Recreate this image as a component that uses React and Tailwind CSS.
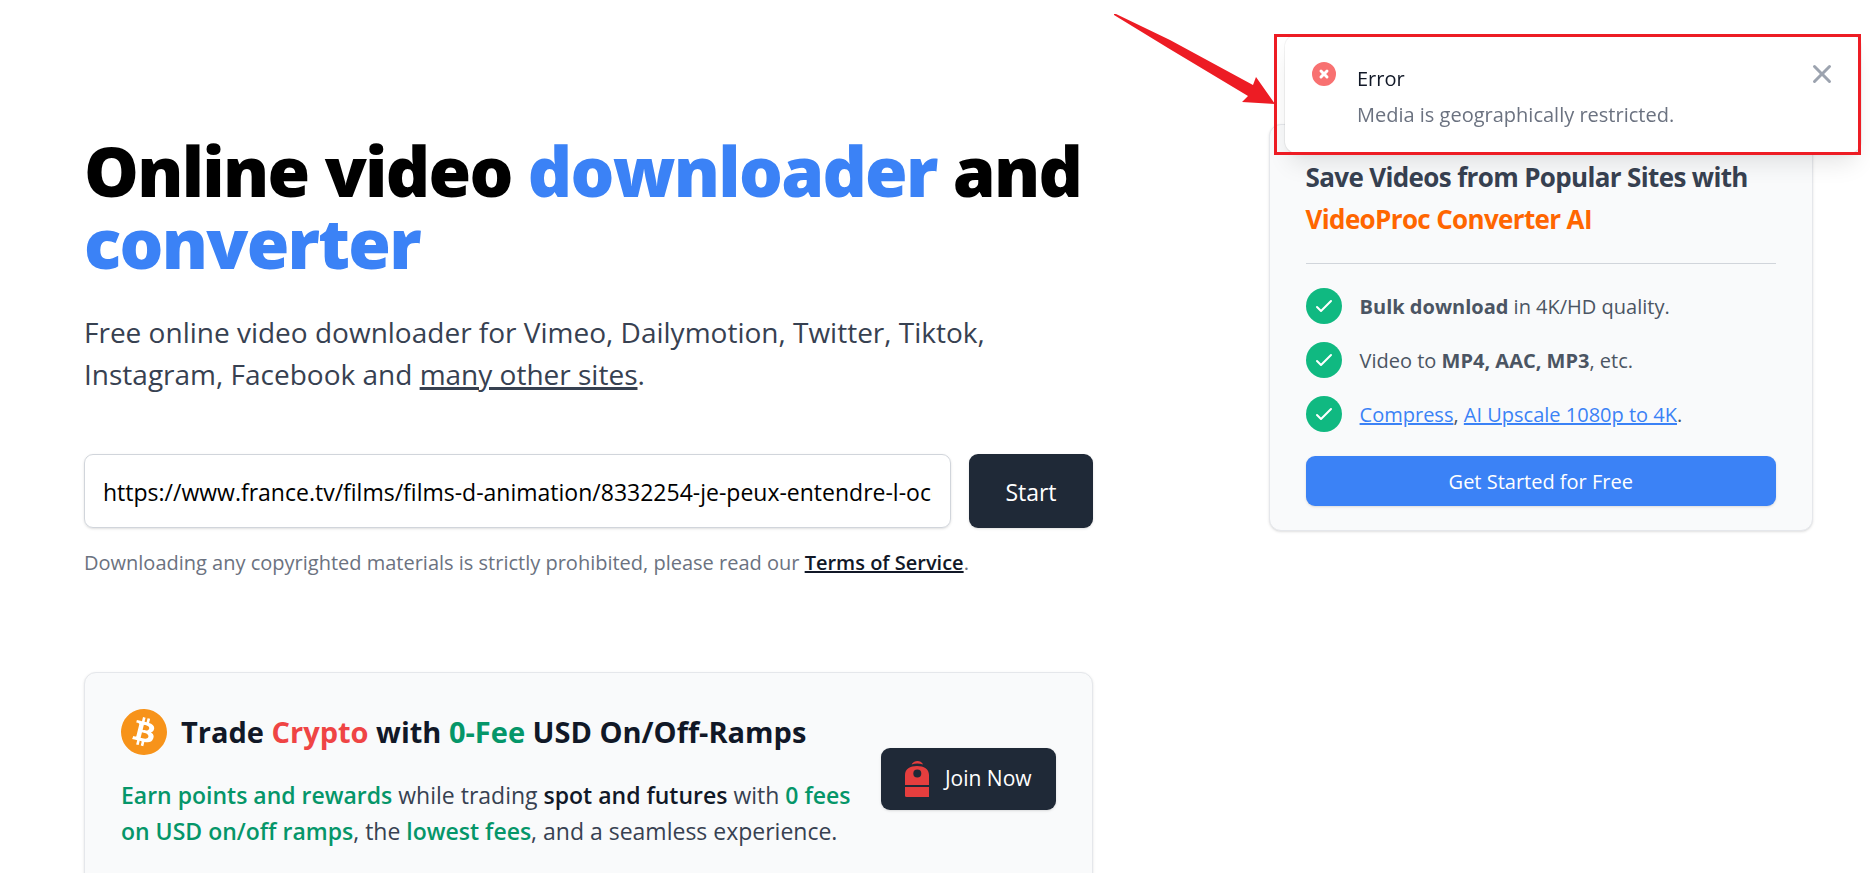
import React, { useState } from 'react';
import { SiBitcoin } from 'react-icons/si';

const features = [
  { id: 'bulk', content: <><strong className="font-bold">Bulk download</strong> in 4K/HD quality.</> },
  { id: 'formats', content: <>Video to <strong className="font-bold">MP4, AAC, MP3</strong>, etc.</> },
  {
    id: 'upscale',
    content: (
      <>
        <a href="#compress" className="text-[#3b82f6] underline decoration-2">Compress</a>,{' '}
        <a href="#upscale" className="text-[#3b82f6] underline decoration-2">AI Upscale 1080p to 4K</a>.
      </>
    )
  }
];

const CheckBadge = () => (
  <span className="flex h-9 w-9 shrink-0 items-center justify-center rounded-full bg-[#10b981]">
    <svg className="h-6 w-6" viewBox="0 0 24 24" fill="none" stroke="white" strokeWidth="2" strokeLinecap="round" strokeLinejoin="round" aria-hidden="true">
      <path d="M5 13l4 4L19 7" />
    </svg>
  </span>
);

const JoinIcon = () => (
  <svg className="h-9 w-6" viewBox="0 0 24 36" fill="#e53e3e" aria-hidden="true">
    <path d="M6.500 3.500C8 1 10 0 12.500 0S17 1 18 3.500C14 2.200 10.500 2.200 6.500 3.500z" />
    <path fillRule="evenodd" d="M0 24V14C0 8 5 5 12 5s12 3 12 9v10zM12.300 8.500a4 4 0 100 8 4 4 0 000-8z" />
    <path d="M0 26h24v10H1.500Q0 36 0 34.500z" />
  </svg>
);

const Toast = ({ onClose }) => (
  <div role="alert" className="fixed right-[9px] top-[35px] z-20 flex w-[576px] items-start rounded-xl bg-white px-6 pb-[23px] pt-6 shadow-[0_15px_23px_-5px_rgba(0,0,0,0.1),0_6px_9px_-3px_rgba(0,0,0,0.05),0_0_0_1px_rgba(0,0,0,0.05)]">
    <svg className="h-[30px] w-[30px] shrink-0 text-[#f87171]" viewBox="0 0 20 20" fill="currentColor" aria-hidden="true">
      <path fillRule="evenodd" clipRule="evenodd" d="M10 18a8 8 0 100-16 8 8 0 000 16zM8.707 7.293a1 1 0 00-1.414 1.414L8.586 10l-1.293 1.293a1 1 0 101.414 1.414L10 11.414l1.293 1.293a1 1 0 001.414-1.414L11.414 10l1.293-1.293a1 1 0 00-1.414-1.414L10 8.586 8.707 7.293z" />
    </svg>
    <div className="ml-[18px] flex-1 pt-[5px]">
      <p className="text-[20px] font-medium leading-[30px] text-[#111827]">Error</p>
      <p className="mt-1.5 text-[20px] leading-[30px] text-[#6b7280]">Media is geographically restricted.</p>
    </div>
    <button type="button" onClick={onClose} aria-label="Close" className="text-[#9ca3af]">
      <svg className="h-[30px] w-[30px]" viewBox="0 0 20 20" fill="currentColor" aria-hidden="true">
        <path fillRule="evenodd" clipRule="evenodd" d="M4.293 4.293a1 1 0 011.414 0L10 8.586l4.293-4.293a1 1 0 111.414 1.414L11.414 10l4.293 4.293a1 1 0 01-1.414 1.414L10 11.414l-4.293 4.293a1 1 0 01-1.414-1.414L8.586 10 4.293 5.707a1 1 0 010-1.414z" />
      </svg>
    </button>
  </div>
);

// Red box and arrow drawn over the notification
const Annotation = () => (
  <>
    <div className="pointer-events-none fixed right-[9px] top-[34px] z-30 h-[121px] w-[587px] border-[3px] border-[#ed1c24]" />
    <svg className="pointer-events-none fixed right-[594px] top-3 z-30 h-[94px] w-[164px]" viewBox="0 0 164 94" fill="#ed1c24" aria-hidden="true">
      <path d="M2 2L4 2L58 28L141 73L144 65L163 92L130 90L136 84L56 36L2 3z" />
    </svg>
  </>
);

const App = () => {
  const [url, setUrl] = useState('https://www.france.tv/films/films-d-animation/8332254-je-peux-entendre-l-ocean.html');
  const [showToast, setShowToast] = useState(true);

  return (
    <div className="h-screen overflow-hidden bg-white font-['Open_Sans','Noto_Sans',sans-serif]">
      {showToast && (
        <>
          <Toast onClose={() => setShowToast(false)} />
          <Annotation />
        </>
      )}

      <main className="grid grid-cols-12 pl-[84px] pr-[57px]">
        {/* Download form */}
        <section className="col-span-7 pt-[134px]">
          <h1 className="text-[69px] font-extrabold leading-[72px] tracking-tight text-black">
            Online video <span className="text-[#3b82f6]">downloader</span> and <span className="text-[#3b82f6]">converter</span>
          </h1>
          <p className="mt-[33px] text-[28px] leading-[42px] text-[#374151]">
            Free online video downloader for Vimeo, Dailymotion, Twitter, Tiktok, Instagram, Facebook and{' '}
            <a href="#sites" className="underline decoration-[3px]">many other sites</a>.
          </p>

          <form className="mt-[59px] flex gap-[18px]" onSubmit={(e) => e.preventDefault()}>
            <input
              type="text"
              aria-label="Video URL"
              value={url}
              onChange={(e) => setUrl(e.target.value)}
              className="h-[74px] min-w-0 flex-1 rounded-[9px] border border-[#d1d5db] px-[18px] pt-0.5 text-[23px] text-black shadow-sm"
            />
            <button type="submit" className="h-[74px] rounded-[9px] bg-[#1f2937] px-9 pt-0.5 text-[23px] font-medium text-white shadow-sm">
              Start
            </button>
          </form>
          <p className="mt-5 text-[20px] leading-[30px] text-[#6b7280]">
            Downloading any copyrighted materials is strictly prohibited, please read our{' '}
            <a href="#terms" className="font-semibold text-[#111827] underline decoration-2">Terms of Service</a>.
          </p>

          {/* Crypto promo */}
          <div className="mt-[94px] flex items-center justify-between rounded-xl border border-[#e5e7eb] bg-[#f9fafb] p-9 shadow-sm">
            <div>
              <div className="flex items-center gap-3.5">
                <span className="rounded-full bg-white">
                  <SiBitcoin className="h-[46px] w-[46px] text-[#f7931a]" aria-hidden="true" />
                </span>
                <h2 className="text-[29px] font-bold leading-[42px] text-[#111827]">
                  Trade <span className="text-[#ef4444]">Crypto</span> with <span className="text-[#059669]">0-Fee</span> USD On/Off-Ramps
                </h2>
              </div>
              <p className="mt-[22px] text-[23px] leading-9 text-[#374151]">
                <strong className="font-semibold text-[#059669]">Earn points and rewards</strong> while trading{' '}
                <strong className="font-semibold text-[#111827]">spot and futures</strong> with{' '}
                <strong className="font-semibold text-[#059669]">0 fees on USD on/off ramps</strong>, the{' '}
                <strong className="font-semibold text-[#059669]">lowest fees</strong>, and a seamless experience.
              </p>
            </div>
            <button type="button" className="flex h-[62px] shrink-0 items-center gap-4 rounded-[9px] bg-[#1f2937] px-6 text-[21px] font-medium text-white shadow-sm">
              <JoinIcon />
              Join Now
            </button>
          </div>
        </section>

        {/* Sponsor card */}
        <aside className="col-span-5 pl-44 pt-[124px]">
          <div className="rounded-xl border border-[#e5e7eb] bg-[#f9fafb] px-9 pb-6 pt-[31px] shadow">
            <h3 className="text-[26px] font-bold leading-[42px] tracking-tight text-[#374151]">
              Save Videos from Popular Sites with <span className="text-[#ff6600]">VideoProc Converter AI</span>
            </h3>
            <hr className="mt-[23px] border-[#d1d5db]" />
            <ul className="mt-6 flex flex-col gap-[18px]">
              {features.map((feature) => (
                <li key={feature.id} className="flex items-center gap-[18px] text-[20px] leading-[34px] text-[#4b5563]">
                  <CheckBadge />
                  <span className="pt-0.5">{feature.content}</span>
                </li>
              ))}
            </ul>
            <button type="button" className="mt-6 h-[50px] w-full rounded-[9px] bg-[#3b82f6] pt-0.5 text-[20px] font-medium text-white shadow-sm">
              Get Started for Free
            </button>
          </div>
        </aside>
      </main>
    </div>
  );
};

export default App;
